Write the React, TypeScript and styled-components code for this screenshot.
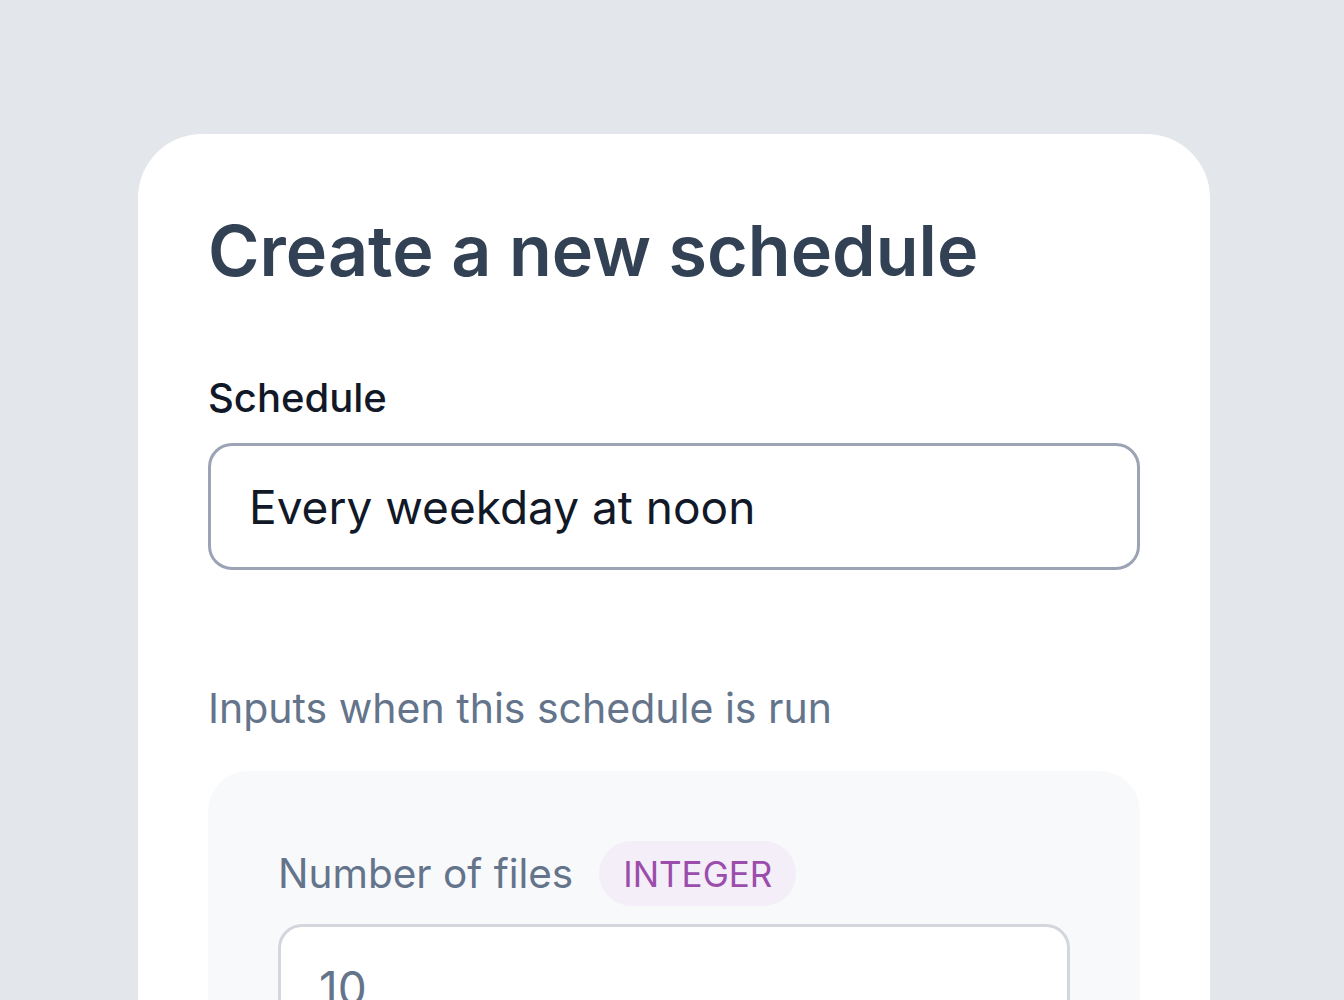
import React from "react";
import styled, { createGlobalStyle } from "styled-components";

const Global = createGlobalStyle`
  html, body { margin: 0; padding: 0; }
  body {
    background: #e3e7ec;
    font-family: Inter, "Noto Sans", sans-serif;
    overflow: hidden;
  }
`;

const Page = styled.div`
  height: 1000px;
  padding: 134px 134px 0 138px;
  box-sizing: border-box;
`;

const Card = styled.div`
  background: #ffffff;
  border-radius: 64px 64px 0 0;
  padding: 74px 70px 0 70px;
  width: 1072px;
  height: 866px;
  box-sizing: border-box;
  overflow: hidden;
`;

const Title = styled.h1`
  margin: 0;
  font-size: 70px;
  line-height: 86px;
  font-weight: 600;
  color: #334155;
  letter-spacing: 0;
`;

const Label = styled.div`
  margin-top: 80px;
  font-size: 40px;
  line-height: 48px;
  font-weight: 500;
  color: #111827;
`;

const Input = styled.div<{ $muted?: boolean }>`
  margin-top: ${(p) => (p.$muted ? "18px" : "21px")};
  box-sizing: border-box;
  height: 127px;
  border: 3px solid ${(p) => (p.$muted ? "#d4d6de" : "#9ca3b5")};
  border-radius: 24px;
  background: #ffffff;
  display: flex;
  align-items: center;
  padding: 0 38px;
  font-size: 46px;
  color: ${(p) => (p.$muted ? "#64748b" : "#111827")};
`;

const Section = styled.div`
  margin-top: 113px;
  font-size: 41px;
  line-height: 50px;
  color: #64748b;
`;

const Panel = styled.div`
  margin-top: 38px;
  background: #f8f9fb;
  border-radius: 40px 40px 0 0;
  padding: 70px 70px 0 70px;
  height: 400px;
`;

const FieldHeader = styled.div`
  display: flex;
  align-items: center;
  gap: 26px;
`;

const FieldLabel = styled.span`
  font-size: 40.5px;
  color: #64748b;
`;

const Badge = styled.span`
  display: inline-flex;
  align-items: center;
  height: 65px;
  padding: 0 24px;
  border-radius: 33px;
  background: #f4eef9;
  color: #9b4dac;
  font-size: 35px;
`;

export default function App() {
  return (
    <>
      <Global />
      <Page>
        <Card>
          <Title>Create a new schedule</Title>
          <Label>Schedule</Label>
          <Input>Every weekday at noon</Input>
          <Section>Inputs when this schedule is run</Section>
          <Panel>
            <FieldHeader>
              <FieldLabel>Number of files</FieldLabel>
              <Badge>INTEGER</Badge>
            </FieldHeader>
            <Input $muted>10</Input>
          </Panel>
        </Card>
      </Page>
    </>
  );
}
